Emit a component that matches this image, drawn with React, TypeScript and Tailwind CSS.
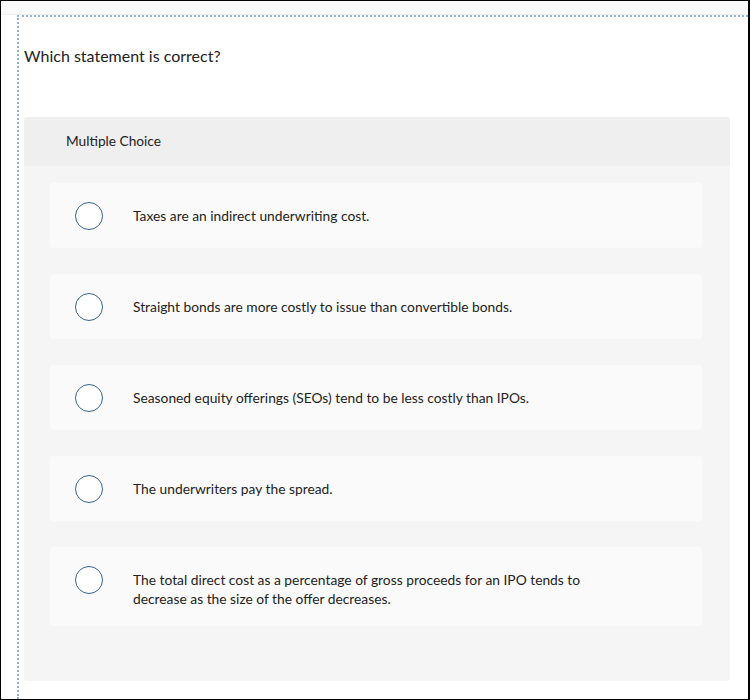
const OPTIONS: string[][] = [
  ['Taxes are an indirect underwriting cost.'],
  ['Straight bonds are more costly to issue than convertible bonds.'],
  ['Seasoned equity offerings (SEOs) tend to be less costly than IPOs.'],
  ['The underwriters pay the spread.'],
  [
    'The total direct cost as a percentage of gross proceeds for an IPO tends to',
    'decrease as the size of the offer decreases.',
  ],
]

export default function App() {
  return (
    <div
      className="w-[750px] h-[700px] bg-white border-l border-t border-r-2 border-b border-black overflow-hidden flex flex-col text-[#222]"
      style={{ fontFamily: 'Lato, "Open Sans", Arial, sans-serif' }}
    >
      {/* top strip */}
      <div className="h-[14px] shrink-0 bg-[#fafafa] border-b border-[#eeeeee]" />

      <div className="flex-1 ml-[16px] border-l-2 border-t-2 border-dotted border-[#8fb0dc] pl-[5px] pr-[18px]">
        <div className="pt-[29px] text-[16px] leading-[20px]">Which statement is correct?</div>

        {/* question panel */}
        <div className="mt-[51px] bg-[#f5f5f5] rounded-[3px] pb-[55px]">
          <div className="h-[49px] bg-[#efefef] rounded-t-[3px] flex items-center pl-[42px] text-[13.7px]">
            Multiple Choice
          </div>

          <div className="pl-[26px] pr-[28px] pt-[17px] flex flex-col gap-[26px]">
            {OPTIONS.map((lines) => (
              <div
                key={lines[0]}
                className="bg-[#fafafa] rounded-[4px] flex items-start pt-[19px] pb-[18px] pl-[25px]"
              >
                <span className="w-[28px] h-[28px] shrink-0 rounded-full border-[1.5px] border-[#36648f] bg-white" />
                <div className="ml-[30px] pt-[4px] text-[13.8px] leading-[19px]">
                  {lines.map((l) => (
                    <div key={l} className="whitespace-nowrap">{l}</div>
                  ))}
                </div>
              </div>
            ))}
          </div>
        </div>
      </div>
    </div>
  )
}
